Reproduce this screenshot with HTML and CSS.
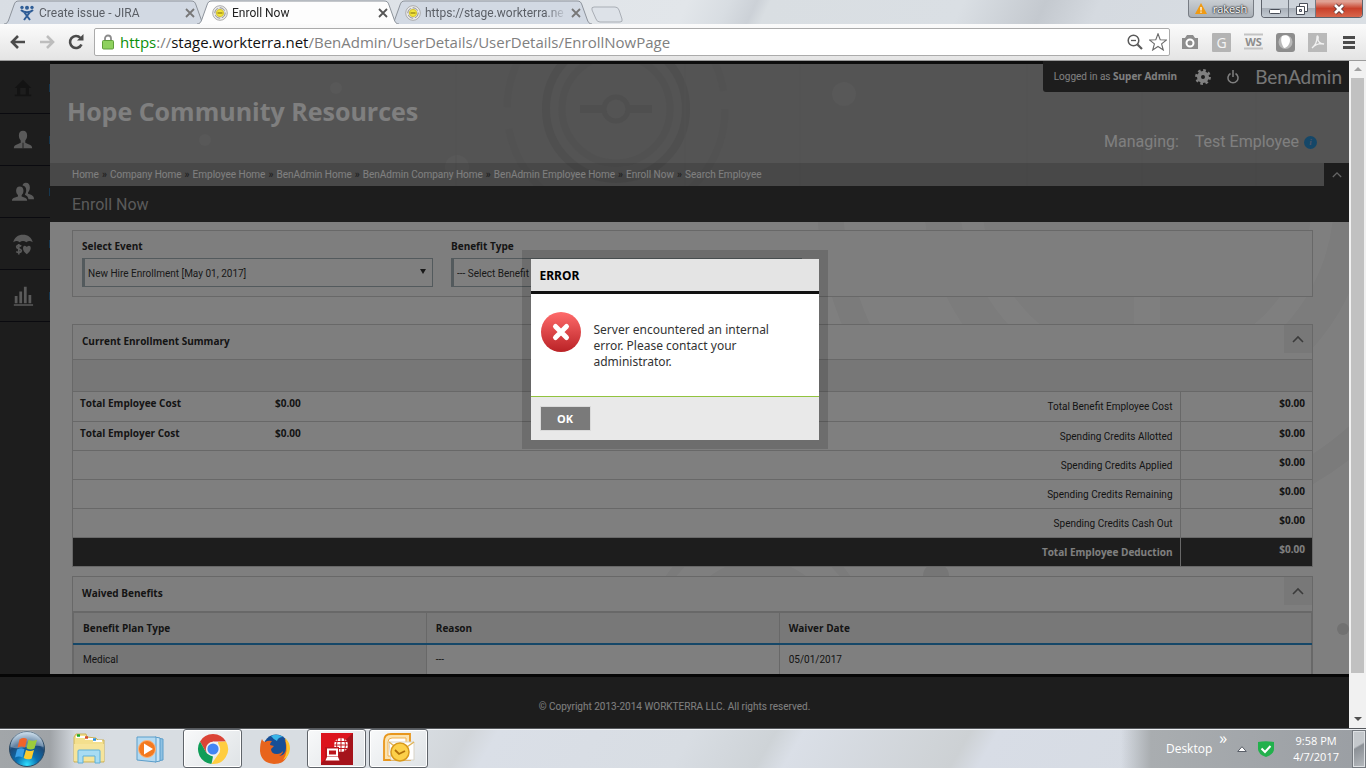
FILE: index.html
```html
<!DOCTYPE html>
<html lang="en">
<head>
    <meta charset="UTF-8">
    <meta name="viewport" content="width=device-width, initial-scale=1.0">
    <title>Enroll Now</title>
    <link rel="stylesheet" href="styles.css">
</head>
<body>
    <!-- Shared shapes -->
    <svg class="defs" width="0" height="0" aria-hidden="true">
        <defs>
            <symbol id="tab" viewBox="0 0 204 24" preserveAspectRatio="none">
                <path d="M1 24 C4 24 5 22 6 19 L11 5 C12 2 13 1 16 1 H188 C191 1 192 2 193 5 L198 19 C199 22 200 24 203 24"/>
            </symbol>
            <symbol id="favicon" viewBox="0 0 16 16">
                <circle cx="8" cy="8" r="7.3" fill="#eee" stroke="#aaa"/>
                <circle cx="8" cy="8" r="5.3" fill="#d9d9d9" stroke="#999" stroke-dasharray="6 2"/>
                <circle cx="8" cy="8" r="3.6" fill="#f3e53a" stroke="#d8c62c"/>
                <path d="M5.5 8h5" stroke="#8c7b15" stroke-width="1.2"/>
            </symbol>
            <symbol id="close" viewBox="0 0 10 10">
                <path d="M1 1l8 8M9 1l-8 8" fill="none" stroke="currentColor" stroke-width="1.8"/>
            </symbol>
            <symbol id="chevron" viewBox="0 0 12 8">
                <path d="M1 7l5-5 5 5" fill="none" stroke="currentColor" stroke-width="1.6"/>
            </symbol>
        </defs>
    </svg>

    <!-- Browser window -->
    <div class="titlebar">
        <div class="tabs">
            <div class="tab">
                <svg class="tab-shape"><use href="#tab"/></svg>
                <svg class="tab-icon" viewBox="0 0 16 16">
                    <circle cx="3" cy="2.4" r="1.7" fill="#2f5d96"/>
                    <circle cx="13" cy="2.4" r="1.7" fill="#2f5d96"/>
                    <circle cx="8" cy="2.8" r="2" fill="#2f5d96"/>
                    <path d="M2 5c2 2 4 2.300 6 2.300s4-.3 6-2.300M11 7L5 15M5 7l6 8" fill="none" stroke="#2f5d96" stroke-width="2"/>
                </svg>
                <span class="tab-title">Create issue - JIRA</span>
                <button class="tab-close" aria-label="Close tab"><svg><use href="#close"/></svg></button>
            </div>
            <div class="tab tab-active">
                <svg class="tab-shape"><use href="#tab"/></svg>
                <svg class="tab-icon"><use href="#favicon"/></svg>
                <span class="tab-title">Enroll Now</span>
                <button class="tab-close" aria-label="Close tab"><svg><use href="#close"/></svg></button>
            </div>
            <div class="tab">
                <svg class="tab-shape"><use href="#tab"/></svg>
                <svg class="tab-icon"><use href="#favicon"/></svg>
                <span class="tab-title">https://stage.workterra.ne</span>
                <button class="tab-close" aria-label="Close tab"><svg><use href="#close"/></svg></button>
            </div>
            <button class="new-tab" aria-label="New tab">
                <svg width="32" height="17" viewBox="0 0 32 17"><path d="M3 1h21q3 0 4 3l3 9q1 3-2 3H9q-3 0-4-3L1 4Q0 1 3 1z" fill="#dde2e8" stroke="#a9aeb5"/></svg>
            </button>
        </div>
        <button class="profile">
            <svg width="12" height="11" viewBox="0 0 12 11"><path d="M6 0l6 11H0z" fill="#f09a12"/><path d="M6 4v3.500M6 8.500v1.200" stroke="#fff" stroke-width="1.300"/></svg>
            rakesh
        </button>
        <div class="window-controls">
            <button aria-label="Minimize"><svg width="14" height="14" viewBox="0 0 14 14"><rect x="1.500" y="7.500" width="11" height="4" rx="1" fill="#fff" stroke="#4a4f59"/></svg></button>
            <button aria-label="Restore"><svg width="14" height="14" viewBox="0 0 14 14"><path d="M4.500 1.500h8v8h-8z" fill="#fff" stroke="#4a4f59"/><path d="M1.500 4.500h8v8h-8z" fill="#fff" stroke="#4a4f59"/><path d="M4.500 7.500h2v2h-2z" fill="#ccd" stroke="#4a4f59"/></svg></button>
            <button class="window-close" aria-label="Close"><svg width="14" height="12" viewBox="0 0 14 12"><path d="M3 2l8 8M11 2l-8 8" stroke="#5a3434" stroke-width="4.500"/><path d="M3 2l8 8M11 2l-8 8" stroke="#fff" stroke-width="2.700"/></svg></button>
        </div>
    </div>

    <div class="toolbar">
        <button class="tool" aria-label="Back"><svg width="16" height="14" viewBox="0 0 16 14"><path d="M15 7H2M8 1L2 7l6 6" fill="none" stroke="#4b4b4b" stroke-width="2.600"/></svg></button>
        <button class="tool" aria-label="Forward"><svg width="16" height="14" viewBox="0 0 16 14"><path d="M1 7h13M8 1l6 6-6 6" fill="none" stroke="#bdbdbd" stroke-width="2.600"/></svg></button>
        <button class="tool" aria-label="Reload"><svg width="16" height="16" viewBox="0 0 16 16"><path d="M13.500 10.500A6 6 0 1 1 12.500 4" fill="none" stroke="#4b4b4b" stroke-width="2.600"/><path d="M15.500 0v6.500H9z" fill="#4b4b4b"/></svg></button>
        <div class="omnibox">
            <svg width="12" height="16" viewBox="0 0 12 16"><path d="M3 8V4.500a3 3 0 0 1 6 0V8" fill="none" stroke="#8b8b8b" stroke-width="1.800"/><rect x=".5" y="6.500" width="11" height="8.500" rx="1" fill="#8ed15e" stroke="#5f9e3a"/></svg>
            <div class="url" role="textbox" aria-label="Address"><span class="url-scheme">https</span>://<span class="url-host">stage.workterra.net</span>/BenAdmin/UserDetails/UserDetails/EnrollNowPage</div>
            <svg width="16" height="16" viewBox="0 0 16 16"><circle cx="6.500" cy="6.500" r="5.300" fill="none" stroke="#5a5a5a" stroke-width="1.500"/><path d="M4 6.500h5" stroke="#5a5a5a" stroke-width="1.300"/><path d="M10.500 10.500l4.500 4.500" stroke="#5a5a5a" stroke-width="2.200"/></svg>
            <svg width="18" height="18" viewBox="0 0 18 18"><path d="M9 .8l2.200 5.900 6.300.3-4.900 3.900 1.700 6.100L9 13.500 3.700 17l1.700-6.100L.5 7l6.300-.3z" fill="#fff" stroke="#6a6a6a" stroke-width="1.100"/></svg>
        </div>
        <div class="extensions">
            <svg viewBox="0 0 20 20"><path d="M2 6h3l2-3h6l2 3h3v11H2z" fill="#8d8d8d"/><circle cx="10" cy="11" r="3.500" fill="#8d8d8d" stroke="#fff" stroke-width="2"/></svg>
            <svg viewBox="0 0 20 20"><rect width="19" height="19" y="1" rx="1" fill="#b4b4b4"/><text x="9.500" y="16" text-anchor="middle" font-size="14" fill="#f4f4f4">G</text></svg>
            <svg viewBox="0 0 20 20"><path d="M0 2.500h19M0 16.500h19" stroke="#c3c3c3" stroke-width="2"/><text x="9.500" y="14" text-anchor="middle" font-size="11" font-weight="700" fill="#8d8d8d">WS</text></svg>
            <svg viewBox="0 0 20 20"><rect width="19" height="19" y="1" rx="3" fill="#8d8d8d"/><circle cx="9.500" cy="10" r="7" fill="#b9b9b9"/><path d="M6 4c4-2 8 0 8 4s-3 8-6 8c-2-3-4-8-2-12z" fill="#fff"/></svg>
            <svg viewBox="0 0 20 20"><rect width="19" height="19" y="1" fill="#b9b9b9"/><path d="M4 16c4-3 5-7 5-11 0-2 2-1 1 2-.5 3 3 5 6 5-4-1-8 0-12 4z" fill="none" stroke="#f1f1f1" stroke-width="1.300"/></svg>
        </div>
        <button class="menu" aria-label="Menu"><svg width="14" height="13" viewBox="0 0 14 13"><path d="M1 1.500h12M1 6.500h12M1 11.500h12" stroke="#4b4b4b" stroke-width="2.800"/></svg></button>
    </div>

    <!-- Page -->
    <div class="viewport">
        <div class="app">
            <div class="app-body">
                <nav class="sidebar">
                    <a href="#" class="side-link side-home" aria-label="Home"><svg viewBox="0 0 24 24"><path d="M12 3l9 9h-2.500v7H21v2H3v-2h2.500v-7H3zM9 12v7h6v-7z" fill="#262626" fill-rule="evenodd"/></svg></a>
                    <a href="#" class="side-link" aria-label="Company"><svg viewBox="0 0 24 24"><path d="M12 2c3 0 4.500 2 4.500 5 0 3-1 4-2 5.500V15l3.500 1.500c3 1.200 4 2 4 4.500H2c0-2.500 1-3.300 4-4.500L9.500 15v-2.500C8.500 11 7.500 10 7.500 7c0-3 1.500-5 4.500-5z"/><path d="M12 15v6" stroke="#3a3a3a"/></svg></a>
                    <a href="#" class="side-link" aria-label="Employees"><svg viewBox="0 0 24 24"><path d="M15 2c3 0 4.500 2 4.500 5s-1 4-2 5.500V14c5 1.800 6.500 2.500 6.500 6h-6c-.5-3-2-4-4-5 1-2 1.500-3 1.500-5 0-3-1.500-4.500-4-5 .5-2 1.500-3 3.500-3z"/><path d="M8.500 6c2.500 0 4 1.700 4 4.500 0 2.500-1 3.500-2 5V17c4.500 1.500 6 2 6 4.500H0C0 19 1.500 18.500 6.500 17v-1.500c-1-1.500-2-2.500-2-5C4.500 7.700 6 6 8.500 6z"/></svg></a>
                    <a href="#" class="side-link" aria-label="Benefits"><svg viewBox="0 0 24 26"><path d="M12 0v2C18 2 22 5 23.500 11c-3-2-5-2-7.500 0-2.500-2-5.500-2-8 0-2.500-2-4.500-2-7.500 0C2 5 6 2 12 2z"/><path d="M10 15.500q-5-2-5.500.8c0 3 5.500 1.700 5.500 4.700-.5 2.700-4 2.300-6 1M7 13v12.500" fill="none" stroke="#b4b4b4" stroke-width="2"/><path d="M16.500 25c-6-4-5-10-2.500-10 1.500 0 2.500 1.500 2.500 1.500s1-1.500 2.500-1.500c3 0 3.500 6-2.500 10z"/></svg></a>
                    <a href="#" class="side-link" aria-label="Reports"><svg viewBox="0 0 24 24"><path d="M3 12h3v8H3zM8 7h3v13H8zM13 2h3v18h-3zM18 11h3v9h-3zM2 21h21v1.500H2z"/></svg></a>
                </nav>

                <main class="main">
                    <header class="header">
                        <svg class="header-pattern" viewBox="0 0 1299 122" preserveAspectRatio="xMinYMin slice" aria-hidden="true">
                            <g fill="none" stroke="#9e9e9e">
                                <circle cx="566" cy="45" r="12" stroke-width="5"/>
                                <circle cx="566" cy="45" r="70" stroke-width="8"/>
                                <circle cx="566" cy="45" r="54" stroke-width="7" opacity=".5"/>
                                <circle cx="566" cy="45" r="109" stroke-width="7" stroke-dasharray="150 22" opacity=".35"/>
                                <path d="M530 45h22M580 45h22" stroke-width="8"/>
                            </g>
                            <g fill="#b0b0b0">
                                <circle cx="286" cy="24" r="6"/>
                                <circle cx="155" cy="76" r="6"/>
                                <circle cx="407" cy="103" r="12"/>
                                <circle cx="794" cy="30" r="12"/>
                            </g>
                            <path d="M406 0v122M635 0v122M750 0v122M977 0v122M1092 0v122M1206 0v122" stroke="#a4a4a4"/>
                        </svg>
                        <div class="header-top">
                            <h1>Hope Community Resources</h1>
                            <div class="header-side">
                                <div class="userbar">
                                    <span>Logged in as <strong>Super Admin</strong></span>
                                    <a href="#" class="gear" aria-label="Settings"><svg width="16" height="16" viewBox="0 0 16 16"><circle cx="8" cy="8" r="4" fill="none" stroke="currentColor" stroke-width="4"/><circle cx="8" cy="8" r="6.600" fill="none" stroke="currentColor" stroke-width="2.600" stroke-dasharray="2.600 2.580"/></svg></a>
                                    <a href="#" class="power" aria-label="Log out"><svg width="12" height="14" viewBox="0 0 12 14"><path d="M3.500 3.500a5 5 0 1 0 5 0M6 0v7" fill="none" stroke="currentColor" stroke-width="1.500"/></svg></a>
                                    <span class="product">BenAdmin</span>
                                </div>
                                <div class="managing">
                                    <span>Managing:</span>
                                    <span>Test Employee</span>
                                    <a href="#" class="info" aria-label="Employee info">i</a>
                                </div>
                            </div>
                        </div>
                        <div class="crumb-bar">
                            <nav class="crumbs">
                                <a href="#">Home</a><i>»</i><a href="#">Company Home</a><i>»</i><a href="#">Employee Home</a><i>»</i><a href="#">BenAdmin Home</a><i>»</i><a href="#">BenAdmin Company Home</a><i>»</i><a href="#">BenAdmin Employee Home</a><i>»</i><a href="#">Enroll Now</a><i>»</i><a href="#">Search Employee</a>
                            </nav>
                            <button class="crumb-toggle" aria-label="Collapse header"><svg width="10" height="7"><use href="#chevron"/></svg></button>
                        </div>
                    </header>
                    <h2 class="page-title">Enroll Now</h2>

                    <div class="content">
                        <svg class="content-pattern" viewBox="0 0 1299 452" preserveAspectRatio="xMaxYMin slice" aria-hidden="true">
                            <circle cx="1097" cy="-23" r="317" fill="none" stroke="#f6f6f6" stroke-width="26"/>
                            <circle cx="1097" cy="-23" r="205" fill="none" stroke="#f8f8f8" stroke-width="36"/>
                            <circle cx="1097" cy="-23" r="165" fill="#f8f8f8"/>
                            <path d="M1097 60v60" stroke="#fff" stroke-width="26"/>
                            <circle cx="708" cy="418" r="108" fill="none" stroke="#f6f6f6" stroke-width="9"/>
                            <circle cx="708" cy="418" r="80" fill="#f6f6f6"/>
                            <circle cx="886" cy="354" r="13" fill="#ececec"/>
                            <circle cx="1293" cy="407" r="6" fill="#e2e2e2"/>
                        </svg>

                        <form class="filters">
                            <div class="field">
                                <label for="event">Select Event</label>
                                <div class="select-wrap">
                                    <select id="event"><option>New Hire Enrollment [May 01, 2017]</option></select>
                                </div>
                            </div>
                            <div class="field">
                                <label for="benefit">Benefit Type</label>
                                <div class="select-wrap">
                                    <select id="benefit"><option>--- Select Benefit Type ---</option></select>
                                </div>
                            </div>
                        </form>

                        <section class="panel">
                            <div class="panel-head">
                                <h3>Current Enrollment Summary</h3>
                                <button class="collapse" aria-label="Collapse summary"><svg width="12" height="8"><use href="#chevron"/></svg></button>
                            </div>
                            <div class="panel-strip"></div>
                            <table class="summary">
                                <tr><th>Total Employee Cost</th><td class="amount">$0.00</td><td class="label">Total Benefit Employee Cost</td><td class="total">$0.00</td></tr>
                                <tr><th>Total Employer Cost</th><td class="amount">$0.00</td><td class="label">Spending Credits Allotted</td><td class="total">$0.00</td></tr>
                                <tr><th></th><td></td><td class="label">Spending Credits Applied</td><td class="total">$0.00</td></tr>
                                <tr><th></th><td></td><td class="label">Spending Credits Remaining</td><td class="total">$0.00</td></tr>
                                <tr><th></th><td></td><td class="label">Spending Credits Cash Out</td><td class="total">$0.00</td></tr>
                                <tr class="grand"><th></th><td></td><td class="label">Total Employee Deduction</td><td class="total">$0.00</td></tr>
                            </table>
                        </section>

                        <section class="panel panel-waived">
                            <div class="panel-head">
                                <h3>Waived Benefits</h3>
                                <button class="collapse" aria-label="Collapse waived benefits"><svg width="12" height="8"><use href="#chevron"/></svg></button>
                            </div>
                            <table class="waived">
                                <thead>
                                    <tr><th>Benefit Plan Type</th><th>Reason</th><th>Waiver Date</th></tr>
                                </thead>
                                <tbody>
                                    <tr><td>Medical</td><td>---</td><td>05/01/2017</td></tr>
                                </tbody>
                            </table>
                        </section>
                    </div>
                </main>
            </div>

            <footer class="footer">© Copyright 2013-2014 WORKTERRA LLC. All rights reserved.</footer>

            <div class="overlay">
                <div class="dialog-frame">
                    <div class="dialog" role="alertdialog" aria-labelledby="dialogTitle">
                        <h2 id="dialogTitle" class="dialog-title">ERROR</h2>
                        <div class="dialog-body">
                            <svg width="40" height="40" viewBox="0 0 40 40">
                                <defs><linearGradient id="red" x2="0" y2="1"><stop stop-color="#ff6b6b"/><stop offset="1" stop-color="#ba2226"/></linearGradient></defs>
                                <circle cx="20" cy="20" r="20" fill="url(#red)"/>
                                <path d="M14.500 14.500l11 11M25.500 14.500l-11 11" stroke="#fff" stroke-width="5" stroke-linecap="round"/>
                            </svg>
                            <p>Server encountered an internal error. Please contact your administrator.</p>
                        </div>
                        <div class="dialog-actions"><button class="ok">OK</button></div>
                    </div>
                </div>
            </div>
        </div>
        <div class="scrollbar"><i class="arrow-up"></i><div class="thumb"></div><i class="arrow-down"></i></div>
    </div>

    <!-- Taskbar -->
    <div class="taskbar">
        <button class="start" aria-label="Start">
            <svg width="38" height="38" viewBox="0 0 38 38">
                <defs><radialGradient id="orb" cx=".5" cy=".95" r=".9"><stop stop-color="#2fe0ff"/><stop offset=".35" stop-color="#0a6fb0"/><stop offset=".7" stop-color="#1d4a78"/><stop offset="1" stop-color="#a9c4da"/></radialGradient></defs>
                <circle cx="19" cy="19" r="17.500" fill="url(#orb)" stroke="#2c4a63"/>
                <path d="M2.500 17A16.500 16.500 0 0 1 35.500 17C25 13 13 21 2.500 17z" fill="#fff" opacity=".3"/>
                <path d="M11.500 9.500q4-2.500 7.500-.5l-2 8.500q-3.500-2-7.500.3z" fill="#f0642a"/>
                <path d="M20.500 9.800q4 2 8.500 0l-2.500 8.700q-4 2-8-.3z" fill="#9ccb3b"/>
                <path d="M9 19.500q4-2.300 7.500-.3l-2 8.300q-3.500-2-7.500 0z" fill="#3aa0e6"/>
                <path d="M18 19.900q4 2 8 .1l-2.300 8.400q-4 2-8-.3z" fill="#fccb2c"/>
            </svg>
        </button>
        <div class="tasks">
            <button class="task" aria-label="File Explorer">
                <svg viewBox="0 0 32 32"><path d="M1 4l2-3h10l1 3 9 1 2 2h6v22H1z" fill="#f3df8d" stroke="#cdb35a"/><path d="M3 4h10M12 6h10M20 8h9" stroke="#fff" stroke-width="2"/><path d="M4 2.500h3" stroke="#1ca82b" stroke-width="2.500"/><path d="M12 4.500h3" stroke="#d54b2c" stroke-width="2.500"/><path d="M20 6.500h3" stroke="#2a8fdc" stroke-width="2.500"/><path d="M1 11h30v17H1z" fill="#f6e49a"/><path d="M5 30V18q0-1 1-1h20q1 0 1 1v12h-5v-7H10v7z" fill="#a8dcf3" stroke="#5fb0d8"/></svg>
            </button>
            <button class="task" aria-label="Media Player">
                <svg viewBox="0 0 32 32"><path d="M22 5l6 1v21l-6 1z" fill="#8fc1e2" stroke="#5b9ecb"/><path d="M20 4l5 1v23l-5 1z" fill="#c8e4f5" stroke="#5b9ecb"/><path d="M2 4h19v25L2 27z" fill="#b4daf1" stroke="#5b9ecb"/><circle cx="12" cy="16" r="8.500" fill="#f47a1f" stroke="#fbb47c"/><path d="M9 10.500l9 5.500-9 5.500z" fill="#fff"/></svg>
            </button>
            <button class="task task-open" aria-label="Chrome">
                <svg viewBox="0 0 32 32"><path d="M16 1a15 15 0 0 1 13 7.500H16L9.500 20 3 8.500A15 15 0 0 1 16 1z" fill="#db4437"/><path d="M3 8.500L9.500 20l6.500 3.500L14.500 31A15 15 0 0 1 3 8.500z" fill="#0f9d58"/><path d="M29 8.500A15 15 0 0 1 14.500 31L22.500 19.500 21 9z" fill="#ffcd40"/><circle cx="16" cy="16" r="7.200" fill="#f1f1f1"/><circle cx="16" cy="16" r="5.600" fill="#4285f4"/></svg>
            </button>
            <button class="task" aria-label="Firefox">
                <svg viewBox="0 0 32 32"><circle cx="17" cy="14" r="12.500" fill="#174f96"/><path d="M12 3q6-3 12 1-5 0-6 4-3-1-6-5z" fill="#39b5e8"/><path d="M3 6q1 3 3 3 3-2 7-1-2 2-2 4l4 1-3 3q0 5 6 5 4 0 6-3 0 3-4 5 7-1 7-8 0-7-2-9 5 4 4 12-1 13-14 13Q2 30 1 18 1 10 3 6z" fill="#e8641c"/><path d="M26 5q5 4 5 11-1 8-7 11 6-8 2-22z" fill="#fcc42b"/></svg>
            </button>
            <button class="task task-open" aria-label="Remote Desktop">
                <svg viewBox="0 0 32 32"><path d="M0 0h32v32H0z" fill="#a5131b"/><path d="M0 0h32L0 30z" fill="#dc141d"/><circle cx="20" cy="12" r="7" fill="#fff"/><path d="M13 12h14M14 8.500h12M14 15.500h12M20 5v14M16.500 5.500q-2 6 0 13M23.500 5.500q2 6 0 13" fill="none" stroke="#c4161d"/><path d="M4 14h14v14H4z" fill="#bb151c"/><path d="M7 16.500h9v6H7z" fill="none" stroke="#fff" stroke-width="2"/><path d="M6 24h11l1.500 3.500h-14z" fill="#fff"/></svg>
            </button>
            <button class="task task-open" aria-label="Outlook">
                <svg viewBox="0 0 32 32"><path d="M1 8q0-7 7-7h19v26H1z" fill="#fbe3b0" stroke="#e8961c" stroke-width="1.800"/><path d="M5 9q0-4 4-4h14v18H5z" fill="#fff" stroke="#f0b050"/><path d="M6 9h25v18H8z" fill="#fff" stroke="#d8d3c6"/><path d="M6 9l12 9L31 9" fill="none" stroke="#e0b458" stroke-width="1.500"/><circle cx="17" cy="19" r="9" fill="#fcd04a" stroke="#d99a1c" stroke-width="1.500"/><path d="M12 17l4 4 6-3" fill="none" stroke="#b0700a" stroke-width="1.800"/></svg>
            </button>
        </div>
        <div class="tray">
            <span class="tray-label">Desktop</span>
            <span class="tray-more">»</span>
            <svg width="10" height="6" viewBox="0 0 10 6"><path d="M5 .7L9.300 5.500H.7z" fill="#fff" stroke="#5a5f68"/></svg>
            <svg width="16" height="16" viewBox="0 0 16 16"><path d="M0 1q8-1.500 16 0v7q0 5-8 8-8-3-8-8z" fill="#22b14c"/><path d="M3.500 7.500l3.500 3.500 5.500-6" fill="none" stroke="#fff" stroke-width="2"/></svg>
            <div class="clock"><span>9:58 PM</span><span>4/7/2017</span></div>
            <button class="show-desktop" aria-label="Show desktop"></button>
        </div>
    </div>
</body>
</html>
```
FILE: styles.css
```css
* {
    margin: 0;
    padding: 0;
    box-sizing: border-box;
}

body {
    display: flex;
    flex-direction: column;
    height: 100vh;
    overflow: hidden;
    font-family: 'Open Sans', 'Noto Sans', sans-serif;
    font-size: 10px;
    line-height: 16px;
    color: #2a2a2a;
}

button {
    border: none;
    background: none;
    font-family: inherit;
    cursor: pointer;
}

a {
    color: inherit;
    text-decoration: none;
}

svg {
    display: block;
    flex-shrink: 0;
}

h1,
h3,
th,
label,
strong {
    font-family: 'Open Sans', sans-serif;
}

.defs {
    position: absolute;
}

/* Title bar */
.titlebar {
    display: flex;
    align-items: flex-start;
    height: 24px;
    padding: 0 3px;
    background: linear-gradient(115deg, #d9dee4 0%, #e2e6ea 50%, #d8dde2 53%, #ccd1d7 55%, #d9dee2 56%, #dadfe4 70%, #c4c9cf 76%, #d5dae0 80%, #dadfe4 100%);
}

.tabs {
    display: flex;
    flex: 1;
}

.tab {
    position: relative;
    display: flex;
    align-items: center;
    gap: 4px;
    width: 204px;
    height: 24px;
    padding: 2px 12px 0 16px;
    color: #5b5f66;
}

.tab + .tab {
    margin-left: -11px;
}

.tab-shape {
    position: absolute;
    inset: 0;
    width: 100%;
    height: 100%;
    fill: #d2d9e3;
    stroke: #8d939b;
}

.tab-active {
    z-index: 1;
    color: #222;
}

.tab-active .tab-shape {
    fill: #fdfdfd;
}

.tab-icon {
    position: relative;
    width: 16px;
    height: 16px;
}

.tab-title {
    position: relative;
    flex: 1;
    overflow: hidden;
    white-space: nowrap;
    font-family: Roboto, sans-serif;
    font-size: 12px;
    -webkit-mask-image: linear-gradient(90deg, #000 85%, transparent);
    mask-image: linear-gradient(90deg, #000 85%, transparent);
}

.tab-close {
    position: relative;
    color: #777;
}

.tab-active .tab-close {
    color: #555;
}

.tab-close svg {
    width: 10px;
    height: 10px;
}

.new-tab {
    margin: 5px 0 0 -2px;
}

.profile {
    display: flex;
    align-items: center;
    justify-content: center;
    gap: 6px;
    width: 66px;
    height: 18px;
    margin-right: 7px;
    border: 1px solid #777c83;
    border-top: none;
    border-radius: 0 0 4px 4px;
    background: linear-gradient(#c9ced3, #a9afb6);
    color: #fff;
    font-size: 11px;
    text-shadow: 0 0 2px #000, 0 0 2px #000;
}

.window-controls {
    display: flex;
    height: 18px;
    border: 1px solid #5d626b;
    border-top: none;
    border-radius: 0 0 4px 4px;
    overflow: hidden;
}

.window-controls button {
    display: flex;
    align-items: center;
    justify-content: center;
    width: 27px;
    border-right: 1px solid #737982;
    background: linear-gradient(#cdd3da 45%, #a9b0b9 50%, #c3cad2);
}

.window-controls .window-close {
    width: 46px;
    border-right: none;
    background: linear-gradient(#e0a193 10%, #c9412b 50%, #d8664c);
}

/* Toolbar */
.toolbar {
    display: flex;
    align-items: center;
    height: 37px;
    padding: 0 10px 0 3px;
    border-bottom: 1px solid #9b9b9b;
    background: linear-gradient(#fbfbfb, #e4e4e4);
}

.tool {
    display: flex;
    justify-content: center;
    width: 29px;
}

.omnibox {
    display: flex;
    align-items: center;
    flex: 1;
    gap: 6px;
    height: 28px;
    margin-left: 4px;
    padding: 0 2px 0 7px;
    border: 1px solid #ababab;
    border-radius: 2px;
    background: #fff;
}

.url {
    flex: 1;
    overflow: hidden;
    white-space: nowrap;
    font-size: 15px;
    line-height: 24px;
    color: #808080;
}

.url-scheme {
    color: #0b8f0b;
}

.url-host {
    color: #111;
}

.extensions {
    display: flex;
    gap: 12px;
    margin: 0 14px 0 10px;
}

.extensions svg {
    width: 20px;
    height: 20px;
}

/* Page */
.viewport {
    display: flex;
    flex: 1;
    min-height: 0;
}

.app {
    position: relative;
    display: flex;
    flex-direction: column;
    flex: 1;
    min-width: 0;
    background: #fff;
    font-family: Roboto, sans-serif;
}

.app-body {
    display: flex;
    flex: 1;
    min-height: 0;
}

.sidebar {
    width: 50px;
    padding-top: 1px;
    background: #3a3a3a;
}

.side-link {
    display: flex;
    align-items: center;
    justify-content: center;
    height: 52px;
    padding-right: 5px;
    border-bottom: 1px solid #15151f;
    background: linear-gradient(#2f6f9f, #2f6f9f) right center / 1px 8px no-repeat;
    fill: #b4b4b4;
}

.side-link svg {
    width: 24px;
    height: 22px;
}

.main {
    display: flex;
    flex-direction: column;
    flex: 1;
    min-width: 0;
}

.header {
    position: relative;
    border-top: 3px solid #1c1c1c;
    background: #a8a8a8;
}

.header-pattern {
    position: absolute;
    inset: 0;
    width: 100%;
    height: 100%;
}

.header-top {
    position: relative;
    display: flex;
    justify-content: space-between;
    height: 99px;
}

.header h1 {
    padding: 29px 0 0 17px;
    font-size: 25px;
    line-height: 36px;
    color: #fff;
}

.header-side {
    display: flex;
    flex-direction: column;
    align-items: flex-end;
    margin-top: -3px;
}

.userbar {
    display: flex;
    align-items: center;
    height: 31px;
    padding: 0 7px 0 11px;
    border-radius: 0 0 0 3px;
    background: #3a3a3a;
    color: #fff;
}

.userbar .gear {
    margin: 0 16px 0 18px;
}

.product {
    margin-left: 16px;
    font-family: Lato, sans-serif;
    font-size: 19px;
    color: #eee;
}

.managing {
    display: flex;
    align-items: center;
    gap: 16px;
    margin: 38px 32px 0 0;
    font-size: 16px;
    line-height: 24px;
    color: #fff;
}

.info {
    width: 13px;
    margin-left: -11px;
    border-radius: 50%;
    background: #2a8fd0;
    color: #9ac;
    font: italic bold 9px/13px 'Liberation Serif', serif;
    text-align: center;
}

.crumb-bar {
    position: relative;
    display: flex;
    justify-content: space-between;
    height: 23px;
    background: rgba(0, 0, 0, 0.14);
}

.crumbs {
    display: flex;
    gap: 3px;
    padding-left: 22px;
    line-height: 24px;
    color: #fff;
}

.crumbs i {
    font-style: normal;
    font-weight: 700;
    color: #444;
}

.crumb-toggle {
    display: flex;
    align-items: center;
    justify-content: center;
    width: 25px;
    background: #3a3a3a;
    color: #ccc;
}

.page-title {
    padding: 2px 0 0 22px;
    background: #3a3a3a;
    color: #b5b5b5;
    font-size: 16px;
    font-weight: 400;
    line-height: 34px;
}

.content {
    position: relative;
    flex: 1;
    min-height: 0;
    padding: 8px 36px 0 22px;
    overflow: hidden;
}

.content-pattern {
    position: absolute;
    inset: 0;
    width: 100%;
    height: 100%;
}

.filters {
    position: relative;
    display: grid;
    grid-template-columns: repeat(2, minmax(0, 351px));
    gap: 18px;
    padding: 7px 9px 9px;
    border: 1px solid #d0d0d0;
    background: #fdfdfd;
}

.field label {
    display: block;
    margin-bottom: 4px;
    font-weight: 700;
}

.select-wrap {
    position: relative;
}

.select-wrap::after {
    content: '';
    position: absolute;
    top: 11px;
    right: 7px;
    border: 3px solid transparent;
    border-top: 5px solid #333;
    border-bottom: none;
}

select {
    display: block;
    width: 100%;
    height: 29px;
    padding: 2px 20px 0 3px;
    border: 1px solid #a7b4ba;
    border-left-width: 3px;
    appearance: none;
    background: #fff;
    font-family: inherit;
    font-size: 10px;
    color: #333;
}

.panel {
    position: relative;
    margin-top: 27px;
    border: 1px solid #d0d0d0;
    background: #fff;
}

.panel-waived {
    margin-top: 9px;
}

.panel-head {
    display: flex;
    justify-content: space-between;
    height: 35px;
    padding-left: 9px;
    border-bottom: 1px solid #d0d0d0;
    background: #fdfdfd;
}

.panel-head h3 {
    font-size: 10px;
    line-height: 32px;
}

.collapse {
    display: flex;
    align-items: center;
    justify-content: center;
    width: 28px;
    height: 28px;
    background: #f0f0f0;
    color: #777;
}

.panel-strip {
    height: 32px;
    border-bottom: 1px solid #d0d0d0;
    background: #efefef;
}

table {
    width: 100%;
    border-collapse: collapse;
    table-layout: fixed;
    text-align: left;
}

/* Enrollment summary */
.summary tr + tr {
    border-top: 1px solid #d0d0d0;
}

.summary th,
.summary td {
    height: 29px;
    padding: 3px 7px 9px;
    font-family: 'Open Sans', sans-serif;
    font-weight: 700;
    vertical-align: top;
}

.summary th {
    width: 195px;
}

.summary .label {
    width: 60%;
    padding-top: 7px;
    padding-bottom: 5px;
    font-family: Roboto, sans-serif;
    font-weight: 400;
    text-align: right;
}

.summary .total {
    width: 132px;
    border-left: 1px solid #d0d0d0;
    text-align: right;
}

.summary .grand {
    background: #3a3a3a;
    color: #fff;
}

.summary .grand .label {
    padding-top: 6px;
    font-family: 'Open Sans', sans-serif;
    font-weight: 700;
}

/* Waived benefits */
.waived {
    border: 1px solid #d0d0d0;
}

.waived th,
.waived td {
    height: 31px;
    padding: 0 9px;
    border-left: 1px solid #d0d0d0;
}

.waived th {
    width: 28.5%;
    border-bottom: 2px solid #2a8fd0;
    background: #f1f1f1;
}

.waived th:last-child {
    width: 43%;
}

.waived td {
    padding-top: 2px;
}

.waived td:first-child {
    background: #ececec;
}

.footer {
    height: 54px;
    border-top: 3px solid #0c0c0c;
    background: #3a3a3a;
    color: #fff;
    line-height: 59px;
    text-align: center;
}

/* Error dialog */
.overlay {
    position: absolute;
    inset: 0;
    z-index: 5;
    display: flex;
    align-items: flex-start;
    justify-content: center;
    padding-top: 189px;
    background: rgba(0, 0, 0, 0.5);
}

.dialog-frame {
    padding: 9px;
    background: rgba(0, 0, 0, 0.14);
}

.dialog {
    width: 288px;
    background: #fff;
    font-family: 'Noto Sans', sans-serif;
}

.dialog-title {
    padding: 2px 0 0 9px;
    border-bottom: 3px solid #111;
    background: #e4e4e4;
    color: #000;
    font-size: 12px;
    line-height: 30px;
}

.dialog-body {
    display: flex;
    gap: 13px;
    padding: 18px 20px 26px 10px;
    font-size: 12px;
    color: #333;
}

.dialog-body p {
    padding-top: 10px;
}

.dialog-actions {
    padding: 9px;
    border-top: 1px solid #92c33f;
    background: #e9e9e9;
}

.ok {
    display: block;
    width: 51px;
    height: 25px;
    border: 1px solid #dadada;
    background: #7a7a7a;
    color: #fff;
    font-size: 11px;
    font-weight: 700;
}

/* Scrollbar */
.scrollbar {
    display: flex;
    flex-direction: column;
    align-items: center;
    width: 17px;
    background: #f1f1f1;
}

.thumb {
    width: 13px;
    height: 595px;
    margin-top: 7px;
    background: #c1c1c1;
}

.arrow-up,
.arrow-down {
    margin-top: 6px;
    border: 4px solid transparent;
    border-top: none;
    border-bottom: 4px solid #a0a0a0;
}

.arrow-down {
    margin: auto 0 7px;
    border-top: 4px solid #505050;
    border-bottom: none;
}

/* Taskbar */
.taskbar {
    display: flex;
    align-items: center;
    height: 40px;
    border-top: 1px solid #55585c;
    background: linear-gradient(90deg, #a2a6a9 0, #9fa3a7 50px, #d3d8de 75px, rgba(211, 216, 222, 0) 110px calc(100% - 245px), #a9adb0 calc(100% - 215px), #9a9ea3),
        linear-gradient(120deg, #d8dde2 30%, #d2d6da 34%, #dadfe7 36%, #d8dde3 50%, #ced3d7 56%, #dadfe7 58%, #cdd1d4 70%, #d8dde6 72%, #d4d9df);
    box-shadow: inset 0 1px #eef0f3;
}

.start {
    margin: 0 13px 0 8px;
}

.tasks {
    display: flex;
    flex: 1;
    gap: 3px;
}

.task {
    display: flex;
    align-items: center;
    justify-content: center;
    width: 59px;
    height: 39px;
}

.task svg {
    width: 32px;
    height: 32px;
}

.task-open {
    border: 1px solid #5f646a;
    border-radius: 3px;
    background: linear-gradient(135deg, #f8f9fa, #dfe3e6);
    box-shadow: inset 0 0 0 1px #fff;
}

.tray {
    display: flex;
    align-items: center;
    color: #fff;
    font-size: 12px;
}

.tray-more {
    margin: 0 10px 22px 7px;
    font-size: 16px;
}

.tray svg + svg {
    margin-left: 11px;
}

.clock {
    display: flex;
    flex-direction: column;
    align-items: center;
    margin: 0 13px 0 19px;
    font-size: 11px;
}

.show-desktop {
    width: 14px;
    height: 38px;
    border: 1px solid #74797f;
    background: linear-gradient(150deg, #c4c8cc 40%, #8b9096 45%, #b6babe);
    box-shadow: inset 0 0 0 1px #dde0e3;
}
```
